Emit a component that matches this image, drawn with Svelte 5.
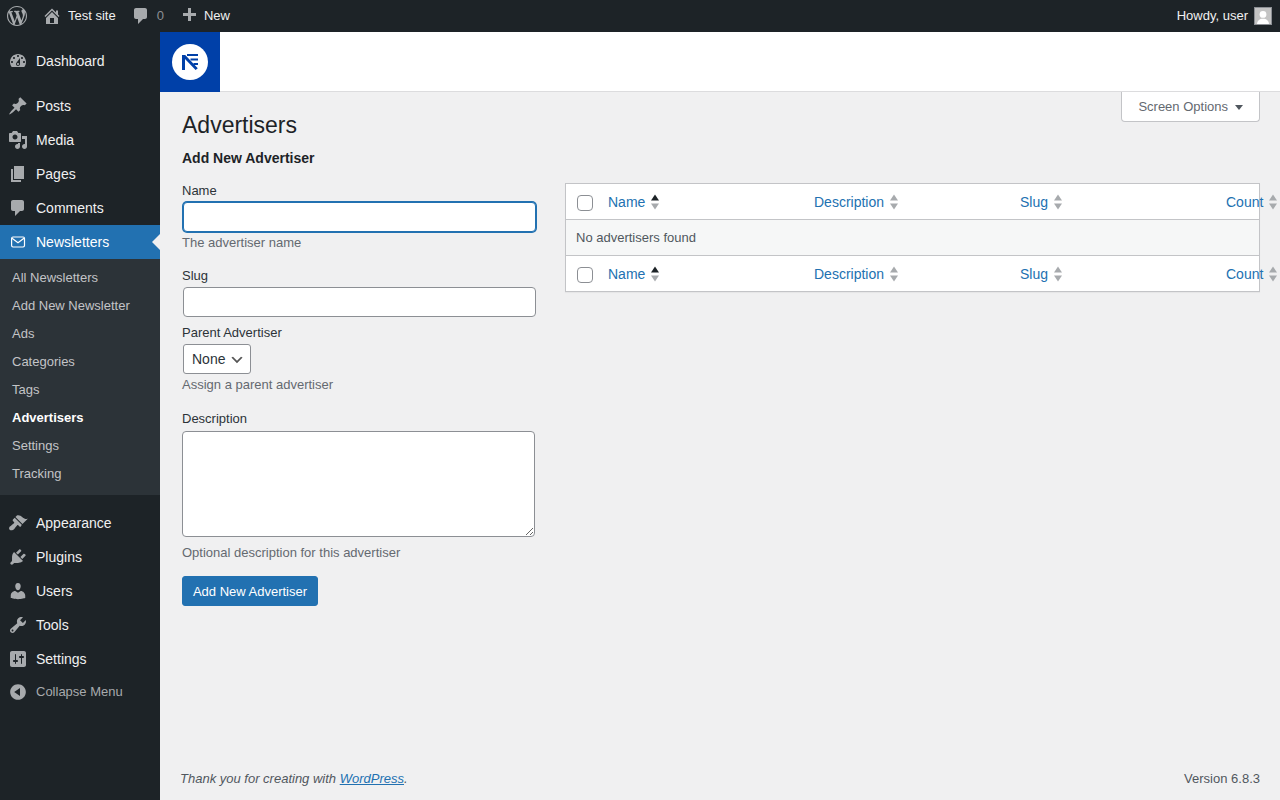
<script>
  const icons = {
    dashboard: 'M3.76 16h12.48c1.1-1.37 1.76-3.11 1.76-5 0-4.42-3.58-8-8-8s-8 3.58-8 8c0 1.89.66 3.63 1.76 5zM10 4c.55 0 1 .45 1 1s-.45 1-1 1-1-.45-1-1 .45-1 1-1zM6 6c.55 0 1 .45 1 1s-.45 1-1 1-1-.45-1-1 .45-1 1-1zm8 0c.55 0 1 .45 1 1s-.45 1-1 1-1-.45-1-1 .45-1 1-1zm-5.37 5.55L12 7v6c0 1.1-.9 2-2 2s-2-.9-2-2c0-.57.24-1.08.63-1.45zM4 10c.55 0 1 .45 1 1s-.45 1-1 1-1-.45-1-1 .45-1 1-1zm12 0c.55 0 1 .45 1 1s-.45 1-1 1-1-.45-1-1 .45-1 1-1zm-5 3c0-.55-.45-1-1-1s-1 .45-1 1 .45 1 1 1 1-.45 1-1z',
    posts: 'M10.44 3.02l1.82-1.82 6.36 6.35-1.83 1.82c-1.05-.68-2.48-.57-3.41.36l-.75.75c-.92.93-1.04 2.35-.35 3.41l-1.83 1.82-2.41-2.41-2.8 2.79c-.42.42-3.38 2.71-3.8 2.29s1.86-3.39 2.28-3.81l2.79-2.79L4.1 9.36l1.83-1.82c1.05.69 2.48.57 3.4-.36l.75-.75c.93-.92 1.05-2.35.36-3.41z',
    media: 'M13 11V4c0-.55-.45-1-1-1h-1.67L9 1H5L3.67 3H2c-.55 0-1 .45-1 1v7c0 .55.45 1 1 1h10c.55 0 1-.45 1-1zM7 4.5c1.38 0 2.5 1.12 2.5 2.5S8.38 9.5 7 9.5 4.5 8.38 4.5 7 5.62 4.5 7 4.5zM14 6h5v10.5c0 1.38-1.12 2.5-2.5 2.5S14 17.88 14 16.5s1.12-2.5 2.5-2.5c.17 0 .34.02.5.05V9h-3V6zm-4 8.05V13h2v3.5c0 1.38-1.12 2.5-2.5 2.5S7 17.88 7 16.5 8.12 14 9.5 14c.17 0 .34.02.5.05z',
    pages: 'M6 15V2h10v13H6zm-1 1h8v2H3V5h2v11z',
    comments: 'M5 2h9c1.1 0 2 .9 2 2v7c0 1.1-.9 2-2 2h-2l-5 5v-5H5c-1.1 0-2-.9-2-2V4c0-1.1.9-2 2-2z',
    appearance: 'M14.48 11.06L7.41 3.99l1.5-1.5c.5-.56 2.3-.47 3.51.32 1.21.8 1.43 1.28 2.91 2.1 1.18.64 2.45 1.26 4.45.85zm-.71.71L6.7 4.7 4.93 6.47c-.39.39-.39 1.02 0 1.41l1.06 1.06c.39.39.39 1.03 0 1.42-.6.6-1.43 1.11-2.21 1.69-.35.26-.7.53-1.01.84C1.43 13.23.43 15.44 1.7 16.7c1.27 1.27 3.47.27 4.8-1.06.31-.31.58-.66.85-1.02.57-.78 1.08-1.61 1.69-2.21.39-.39 1.02-.39 1.41 0l1.06 1.06c.39.39 1.02.39 1.41 0z',
    plugins: 'M13.11 4.36L9.87 7.6 8 5.73l3.24-3.24c.35-.34 1.05-.2 1.56.32.52.51.66 1.21.31 1.55zm-8 1.77l.91-1.12 9.01 9.01-1.19.84c-.71.71-2.63 1.16-3.82 1.16H6.14L4.9 17.26c-.59.59-1.54.59-2.12 0-.59-.58-.59-1.53 0-2.12l1.24-1.24v-3.88c0-1.13.4-3.19 1.09-3.89zm7.26 3.97l3.24-3.24c.34-.35 1.04-.21 1.55.31.52.51.66 1.21.31 1.55l-3.24 3.25z',
    users: 'M10 9.25c-2.27 0-2.73-3.44-2.73-3.44C7 4.02 7.82 2 9.97 2c2.16 0 2.98 2.02 2.71 3.81 0 0-.41 3.44-2.68 3.44zm0 2.57L12.72 10c2.39 0 4.52 2.33 4.52 4.53v2.49s-3.65 1.13-7.24 1.13c-3.65 0-7.24-1.13-7.24-1.13v-2.49c0-2.25 1.94-4.48 4.47-4.48z',
    tools: 'M16.68 9.77c-1.34 1.34-3.3 1.67-4.95.99l-5.41 6.52c-.99.99-2.59.99-3.58 0s-.99-2.59 0-3.57l6.52-5.42c-.68-1.65-.35-3.61.99-4.95 1.28-1.28 3.12-1.62 4.72-1.06l-2.89 2.89 2.82 2.82 2.86-2.87c.53 1.58.18 3.39-1.08 4.65zM3.81 16.21c.4.39 1.04.39 1.43 0 .4-.4.4-1.04 0-1.43-.39-.4-1.03-.4-1.43 0-.39.39-.39 1.03 0 1.43z',
    settings: 'M18 16V4c0-1.1-.9-2-2-2H4c-1.1 0-2 .9-2 2v12c0 1.1.9 2 2 2h12c1.1 0 2-.9 2-2zM8 11h1c.55 0 1 .45 1 1s-.45 1-1 1H8v1.5c0 .28-.22.5-.5.5s-.5-.22-.5-.5V13H6c-.55 0-1-.45-1-1s.45-1 1-1h1V5.5c0-.28.22-.5.5-.5s.5.22.5.5V11zm5-2h-1c-.55 0-1-.45-1-1s.45-1 1-1h1V5.5c0-.28.22-.5.5-.5s.5.22.5.5V7h1c.55 0 1 .45 1 1s-.45 1-1 1h-1v5.5c0 .28-.22.5-.5.5s-.5-.22-.5-.5V9z',
    collapse: 'M10 2.16c4.33 0 7.84 3.51 7.84 7.84s-3.51 7.84-7.84 7.84S2.16 14.33 2.16 10 5.71 2.16 10 2.16zm2 11.72V6.12L6.18 9.97z',
    wp: 'M20 10c0-5.51-4.49-10-10-10C4.48 0 0 4.49 0 10c0 5.52 4.48 10 10 10 5.51 0 10-4.48 10-10zM7.78 15.37L4.37 6.22c.55-.02 1.17-.08 1.17-.08.5-.06.44-1.13-.06-1.11 0 0-1.45.11-2.37.11-.18 0-.37 0-.58-.01C4.12 2.69 6.87 1.11 10 1.11c2.33 0 4.45.87 6.05 2.34-.68-.11-1.65.39-1.65 1.58 0 .74.45 1.36.9 2.1.35.61.55 1.36.55 2.46 0 1.49-1.4 5-1.4 5l-3.03-8.37c.54-.02.82-.17.82-.17.5-.05.44-1.25-.06-1.22 0 0-1.44.12-2.38.12-.87 0-2.33-.12-2.33-.12-.5-.03-.56 1.2-.06 1.22l.92.08 1.26 3.41zM17.41 10c.24-.64.74-1.87.43-4.25.7 1.29 1.05 2.71 1.05 4.25 0 3.29-1.73 6.24-4.4 7.78.97-2.59 1.94-5.2 2.92-7.78zM6.1 18.09C3.12 16.65 1.11 13.53 1.11 10c0-1.3.23-2.48.72-3.59C3.25 10.3 4.67 14.2 6.1 18.09zm4.03-6.63l2.58 6.98c-.86.29-1.76.45-2.71.45-.79 0-1.57-.11-2.29-.33.81-2.38 1.62-4.74 2.42-7.1z',
    home: 'M16 8.5l1.53 1.53-1.06 1.06L10 4.62l-6.47 6.47-1.06-1.06L10 2.5l4 4v-2h2v4zm-6-2.46l6 5.99V18H4v-5.97zM12 17v-5H8v5h4z',
    plus: 'M17 7v3h-5v5H9v-5H4V7h5V2h3v5h5z'
  };
  const top = [
    { k: 'posts', t: 'Posts' }, { k: 'media', t: 'Media' },
    { k: 'pages', t: 'Pages' }, { k: 'comments', t: 'Comments' }
  ];
  const sub = ['All Newsletters', 'Add New Newsletter', 'Ads', 'Categories', 'Tags', 'Advertisers', 'Settings', 'Tracking'];
  const bottom = [
    { k: 'appearance', t: 'Appearance' }, { k: 'plugins', t: 'Plugins' }, { k: 'users', t: 'Users' },
    { k: 'tools', t: 'Tools' }, { k: 'settings', t: 'Settings' }
  ];
  const cols = [
    { t: 'Name', cls: 'c-name', active: true },
    { t: 'Description', cls: 'c-desc' },
    { t: 'Slug', cls: 'c-slug' },
    { t: 'Count', cls: 'c-count' }
  ];
</script>

{#snippet icon(k, cls = 'mi')}
  <svg class={cls} viewBox="0 0 20 20" aria-hidden="true"><path d={icons[k]} /></svg>
{/snippet}

{#snippet headRow()}
  <div class="tr head">
    <span class="cb-cell"><input class="cb" type="checkbox" /></span>
    {#each cols as c}
      <span class="th {c.cls}">
        <a href="#top">{c.t}</a>
        <svg class="sort" viewBox="0 0 10 16" aria-hidden="true">
          <path class={c.active ? 'on' : ''} d="M5 0.5L9 6.5H1z" />
          <path d="M5 15.5L1 9.5H9z" />
        </svg>
      </span>
    {/each}
  </div>
{/snippet}

<div class="page">
  <header class="bar">
    <div class="bar-left">
      <span class="bi wp">{@render icon('wp', 'wpi')}</span>
      <span class="bi home">{@render icon('home', 'bii')}<span>Test site</span></span>
      <span class="bi cm">{@render icon('comments', 'bii')}<span class="zero">0</span></span>
      <span class="bi nw">{@render icon('plus', 'bii')}<span>New</span></span>
    </div>
    <div class="bar-right">
      <span>Howdy, user</span>
      <svg class="avatar" viewBox="0 0 18 18" aria-hidden="true">
        <rect width="18" height="18" fill="#c4c4c4" />
        <circle cx="9" cy="7.4" r="3.4" fill="#fff" />
        <path d="M3 18c0-4.6 2.6-6.2 6-6.2s6 1.6 6 6.2z" fill="#fff" />
      </svg>
    </div>
  </header>

  <div class="body">
    <nav class="side">
      <ul class="menu first">
        <li class="item">{@render icon('dashboard')}<span>Dashboard</span></li>
      </ul>
      <ul class="menu group">
        {#each top as m}
          <li class="item">{@render icon(m.k)}<span>{m.t}</span></li>
        {/each}
        <li class="item current">
          <svg class="mi" viewBox="0 0 20 20" aria-hidden="true">
            <rect x="3.6" y="5" width="12.9" height="10" rx="1.4" fill="none" stroke="#fff" stroke-width="1.2" />
            <path d="M4 6.2l6 4.6 6-4.6" fill="none" stroke="#fff" stroke-width="1.2" />
          </svg>
          <span>Newsletters</span>
        </li>
      </ul>
      <ul class="submenu">
        {#each sub as s}
          <li class:sel={s === 'Advertisers'}>{s}</li>
        {/each}
      </ul>
      <ul class="menu lower">
        {#each bottom as m}
          <li class="item">{@render icon(m.k)}<span>{m.t}</span></li>
        {/each}
        <li class="item collapse">{@render icon('collapse')}<span>Collapse Menu</span></li>
      </ul>
    </nav>

    <main class="main">
      <div class="brand">
        <div class="logo">
          <svg viewBox="0 0 36 36" width="36" height="36" aria-hidden="true">
            <circle cx="18" cy="18" r="18" fill="#fff" />
            <path d="M10 11h3.2L25.8 24.2 23.6 26 13 15v11h-3z" fill="#0040a8" />
            <path d="M15 10h11v2H15zM18.5 14.5H26v2h-7.5zM21.5 19H26v2h-4.5z" fill="#0040a8" />
          </svg>
        </div>
      </div>

      <div class="wrap">
        <div class="screen-row">
          <button class="screen-opt" type="button">Screen Options <i class="caret"></i></button>
        </div>
        <h1>Advertisers</h1>
        <div class="cols">
          <form class="form">
            <h2>Add New Advertiser</h2>
            <div class="f f-name">
              <label for="n">Name</label>
              <input id="n" class="text focus" type="text" />
              <p>The advertiser name</p>
            </div>
            <div class="f f-slug">
              <label for="s">Slug</label>
              <input id="s" class="text" type="text" />
            </div>
            <div class="f f-parent">
              <label for="p">Parent Advertiser</label>
              <select id="p"><option>None</option></select>
              <p>Assign a parent advertiser</p>
            </div>
            <div class="f f-desc">
              <label for="d">Description</label>
              <textarea id="d"></textarea>
              <p>Optional description for this advertiser</p>
            </div>
            <button class="primary" type="button">Add New Advertiser</button>
          </form>

          <div class="table">
            {@render headRow()}
            <div class="tr empty">No advertisers found</div>
            {@render headRow()}
          </div>
        </div>
      </div>

      <footer class="foot">
        <em>Thank you for creating with <a href="#top">WordPress</a>.</em>
        <span>Version 6.8.3</span>
      </footer>
    </main>
  </div>
</div>

<style>
  :global(body) {
    margin: 0;
    background: #f0f0f1;
    font-family: "Liberation Sans", Arial, sans-serif;
    font-size: 13px;
    color: #3c434a;
  }
  ul { list-style: none; margin: 0; padding: 0; }
  .page { width: 1280px; height: 800px; overflow: hidden; display: flex; flex-direction: column; }

  .bar {
    height: 32px; flex: none; background: #1d2327; color: #f0f0f1;
    display: flex; justify-content: space-between; align-items: center;
    font-size: 13px; line-height: 32px;
  }
  .bar-left { display: flex; align-items: center; height: 32px; }
  .bi { display: flex; align-items: center; }
  .wp { width: 20px; padding-left: 7px; }
  .wpi { width: 20px; height: 20px; fill: #a7aaad; display: block; }
  .bii { width: 20px; height: 20px; fill: #a7aaad; display: block; flex: none; }
  .home { margin-left: 15px; gap: 6px; }
  .home .bii { margin-left: 0; }
  .cm { margin-left: 15px; }
  .cm .bii { margin-left: 0; }
  .zero { margin-left: 6px; color: #8c8f94; }
  .nw { margin-left: 15px; }
  .nw span { margin-left: 5px; }
  .nw .bii { margin-left: 0; }
  .bar-right { display: flex; align-items: center; gap: 6px; padding-right: 8px; }
  .avatar { width: 18px; height: 18px; display: block; outline: 1px solid #8c8f94; outline-offset: -1px; }

  .body { flex: 1; display: flex; min-height: 0; }
  .side { width: 160px; flex: none; background: #1d2327; color: #f0f0f1; padding-top: 12px; }
  .item {
    height: 34px; display: flex; align-items: center; font-size: 14px; position: relative;
  }
  .mi { width: 20px; height: 20px; fill: #a7aaad; margin-left: 8px; margin-right: 8px; flex: none; display: block; }
  .group { margin-top: 11px; }
  .current { background: #2271b1; color: #fff; }
  .current .mi { fill: #fff; }
  .current::after {
    content: ""; position: absolute; right: 0; top: 50%; margin-top: -8px;
    border: 8px solid transparent; border-right-color: #f0f0f1; border-left-width: 0;
  }
  .submenu { background: #2c3338; padding: 5px 0 7px; }
  .submenu li { height: 28px; line-height: 28px; padding-left: 12px; font-size: 13px; color: #c3c4c7; }
  .submenu .sel { color: #fff; font-weight: 700; }
  .lower { margin-top: 11px; }
  .collapse { font-size: 13px; color: #a7aaad; height: 32px; }
  .collapse .mi { fill: #a7aaad; }
  .collapse span { position: relative; top: -1px; }

  .main { flex: 1; min-width: 0; display: flex; flex-direction: column; position: relative; }
  .brand { height: 59px; flex: none; background: #fff; border-bottom: 1px solid #dcdcde; }
  .logo { width: 60px; height: 60px; background: #0040a8; display: flex; align-items: center; justify-content: center; }
  .wrap { flex: 1; padding: 0 20px 0 22px; position: relative; min-height: 0; }
  .screen-row { position: absolute; top: 0; right: 20px; }
  .screen-opt {
    width: 139px; height: 30px; box-sizing: border-box; padding: 0 16px 0 0;
    background: #fff; border: 1px solid #c3c4c7; border-top: 0; border-radius: 0 0 4px 4px;
    font: 13px "Liberation Sans", Arial, sans-serif; color: #646970;
    display: flex; align-items: center; justify-content: flex-end; gap: 7px;
  }
  .caret { width: 0; height: 0; border: 4px solid transparent; border-top: 5px solid #50575e; border-bottom: 0; margin-top: 1px; }
  h1 { font-size: 23px; font-weight: 400; line-height: 29px; color: #1d2327; margin: 0; padding: 19px 0 0; }
  h2 { font-size: 14px; font-weight: 700; line-height: 18px; color: #1d2327; margin: 0 0 16px; }
  .cols { display: flex; margin-top: 9px; align-items: flex-start; }
  .form { width: 355px; flex: none; margin-right: 28px; }
  .f label { display: block; line-height: 16px; color: #2c3338; }
  .f p { margin: 0; line-height: 16px; color: #646970; }
  .f-name { margin-bottom: 0; }
  .text {
    display: block; box-sizing: border-box; width: 353px; height: 30px; margin: 3px 0 0 1px;
    background: #fff; border: 1px solid #8c8f94; border-radius: 4px; padding: 0 8px; outline: 0;
  }
  .focus { border-color: #2271b1; box-shadow: 0 0 0 1px #2271b1; }
  .f-name p { margin-top: 3px; }
  .f-slug { margin-top: 17px; }
  .f-parent { margin-top: 8px; }
  select {
    display: block; box-sizing: border-box; width: 68px; height: 30px; margin: 3px 0 0 1px; padding: 0 8px;
    appearance: none; border: 1px solid #8c8f94; border-radius: 3px; color: #2c3338;
    font: 14px "Liberation Sans", Arial, sans-serif;
    background: #fff url("data:image/svg+xml,%3Csvg xmlns='http://www.w3.org/2000/svg' width='20' height='20'%3E%3Cpath d='M5 6l5 5 5-5 2 1-7 7-7-7z' fill='%23555'/%3E%3C/svg%3E") no-repeat right 5px top 55%;
    background-size: 16px 16px;
  }
  .f-parent p { margin-top: 3px; }
  .f-desc { margin-top: 18px; }
  textarea {
    display: block; box-sizing: border-box; width: 353px; height: 106px; margin: 4px 0 0;
    background: #fff; border: 1px solid #8c8f94; border-radius: 4px; padding: 2px 6px;
  }
  .f-desc p { margin-top: 8px; }
  .primary {
    display: block; margin-top: 15px; width: 136px; height: 30px; box-sizing: border-box; padding: 0;
    background: #2271b1; border: 1px solid #2271b1; border-radius: 3px; color: #fff;
    font: 13px "Liberation Sans", Arial, sans-serif;
  }

  .table { width: 695px; box-sizing: border-box; border: 1px solid #c3c4c7; background: #fff; margin-top: 34px; box-shadow: 0 1px 1px rgba(0,0,0,.04); }
  .tr { height: 35px; box-sizing: content-box; display: flex; align-items: center; }
  .head { position: relative; }
  .cb-cell { width: 42px; flex: none; padding-left: 11px; box-sizing: border-box; display: flex; align-items: center; }
  .cb {
    appearance: none; margin: 2px 0 0; width: 16px; height: 16px; box-sizing: border-box;
    background: #fff; border: 1px solid #8c8f94; border-radius: 4px;
  }
  .th { display: flex; align-items: center; gap: 5px; font-size: 14px; flex: none; }
  .th a { color: #2271b1; text-decoration: none; }
  .c-name, .c-desc, .c-slug { width: 206px; }
  .c-count { flex: 1; justify-content: flex-end; padding-right: 14px; }
  .sort { width: 10px; height: 16px; display: block; fill: #a7aaad; }
  .sort .on { fill: #1d2327; }
  .empty {
    height: 35px; background: #f6f7f7; color: #50575e; padding-left: 10px;
    border-top: 1px solid #c3c4c7; border-bottom: 1px solid #c3c4c7;
  }

  .foot {
    position: absolute; left: 20px; right: 20px; bottom: 13px;
    display: flex; justify-content: space-between; color: #50575e; line-height: 16px;
  }
  .foot a { color: #2271b1; }
</style>
